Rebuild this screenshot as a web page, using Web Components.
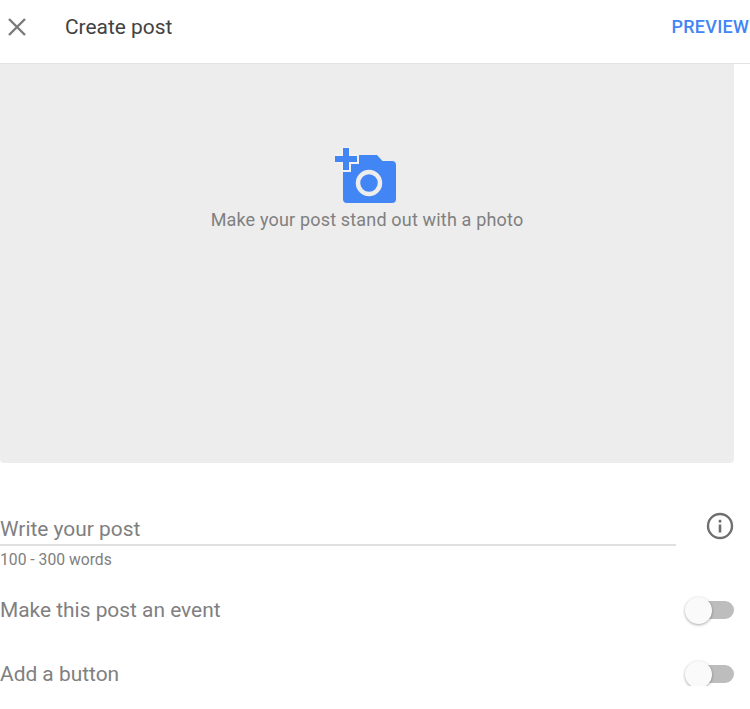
<!DOCTYPE html>
<html>
<head>
<meta charset="utf-8">
<title>Create post</title>
<style>
html, body { margin: 0; background: #fff; }
body { font-family: Roboto, "Liberation Sans", sans-serif; overflow: hidden; }
</style>
</head>
<body>
<post-header>Create post</post-header>
<photo-drop>Make your post stand out with a photo</photo-drop>
<post-field label="Write your post" hint="100 - 300 words"></post-field>
<toggle-row style="margin-top:29px">Make this post an event</toggle-row>
<toggle-row style="margin-top:40px">Add a button</toggle-row>

<script>
class PostHeader extends HTMLElement {
	constructor() {
		super();
		this.attachShadow({ mode: 'open' });
		this.shadowRoot.innerHTML = `
      <style>
        :host {
          display: flex;
          align-items: center;
          box-sizing: border-box;
          height: 64px;
          padding: 0 1px 10px 5px;
          border-bottom: 1px solid #e3e3e3;
        }
        svg { width: 24px; height: 24px; display: block; }
        .title { margin-left: 36px; font-size: 20.9px; color: #424242; flex: 1; }
        .action { font-size: 18px; font-weight: 500; color: #4285f4; letter-spacing: 0.25px; }
      </style>
      <svg viewBox="0 0 24 24"><path d="M4 4 L20 20 M20 4 L4 20" stroke="#7a7a7a" stroke-width="2.4" fill="none"/></svg>
      <span class="title"><slot></slot></span>
      <span class="action">PREVIEW</span>
    `;
	}
}

class PhotoDrop extends HTMLElement {
	constructor() {
		super();
		this.attachShadow({ mode: 'open' });
		this.shadowRoot.innerHTML = `
      <style>
        :host {
          display: flex;
          flex-direction: column;
          align-items: center;
          box-sizing: border-box;
          width: 734px;
          height: 399px;
          padding-top: 83px;
          background: #ededed;
          border-radius: 0 0 4px 4px;
        }
        svg { width: 62px; height: 57px; display: block; margin-left: -2px; }
        .text { margin-top: 5px; font-size: 18px; color: #808080; letter-spacing: 0.17px; }
      </style>
      <svg viewBox="0 0 62 57">
        <path d="M8 12 a4 4 0 0 1 4-4 h30 l5.5 6 h9.5 a4 4 0 0 1 4 4 v34 a4 4 0 0 1-4 4 h-45 a4 4 0 0 1-4-4z" fill="#4285f4"/>
        <path d="M8 1 h6 v8 h8 v6 h-8 v8 h-6 v-8 h-8 v-6 h8z" fill="#4285f4" stroke="#f1f1f1" stroke-width="4" paint-order="stroke"/>
        <circle cx="34" cy="36" r="11" fill="#4285f4" stroke="#ededed" stroke-width="4.5"/>
      </svg>
      <span class="text"><slot></slot></span>
    `;
	}
}

class PostField extends HTMLElement {
	constructor() {
		super();
		this.attachShadow({ mode: 'open' });
		this.shadowRoot.innerHTML = `
      <style>
        :host {
          display: flex;
          align-items: flex-start;
          margin-top: 49px;
        }
        .field { width: 676px; }
        .label {
          height: 32px;
          line-height: 35px;
          font-size: 20.9px;
          color: #808080;
          border-bottom: 2px solid #e0e0e0;
          margin-left: -1px;
          padding-left: 1px;
        }
        .hint { margin-top: 5px; font-size: 15.7px; line-height: 18px; color: #808080; }
        svg { width: 30px; height: 30px; display: block; margin: -1px 0 0 29px; }
      </style>
      <div class="field">
        <div class="label"></div>
        <div class="hint"></div>
      </div>
      <svg viewBox="0 0 30 30">
        <circle cx="15" cy="15" r="12" fill="none" stroke="#6f6f6f" stroke-width="2.4"/>
        <rect x="13.7" y="13.5" width="2.6" height="8" fill="#6f6f6f"/>
        <rect x="13.7" y="8.8" width="2.6" height="2.8" fill="#6f6f6f"/>
      </svg>
    `;
	}

	connectedCallback() {
		this.shadowRoot.querySelector('.label').textContent = this.getAttribute('label');
		this.shadowRoot.querySelector('.hint').textContent = this.getAttribute('hint');
	}
}

class ToggleRow extends HTMLElement {
	constructor() {
		super();
		this.attachShadow({ mode: 'open' });
		this.shadowRoot.innerHTML = `
      <style>
        :host {
          display: flex;
          align-items: center;
          justify-content: space-between;
          width: 734px;
          height: 24px;
          font-size: 20.9px;
          color: #808080;
        }
        .switch { position: relative; width: 46px; height: 18px; border-radius: 9px; background: #bdbdbd; }
        .knob {
          position: absolute;
          left: -3px;
          top: -4px;
          width: 27px;
          height: 27px;
          border-radius: 50%;
          background: #fafafa;
          box-shadow: 0 1px 3px rgba(0, 0, 0, 0.35);
        }
      </style>
      <span><slot></slot></span>
      <div class="switch"><div class="knob"></div></div>
    `;
	}
}

customElements.define('post-header', PostHeader);
customElements.define('photo-drop', PhotoDrop);
customElements.define('post-field', PostField);
customElements.define('toggle-row', ToggleRow);
</script>
</body>
</html>
